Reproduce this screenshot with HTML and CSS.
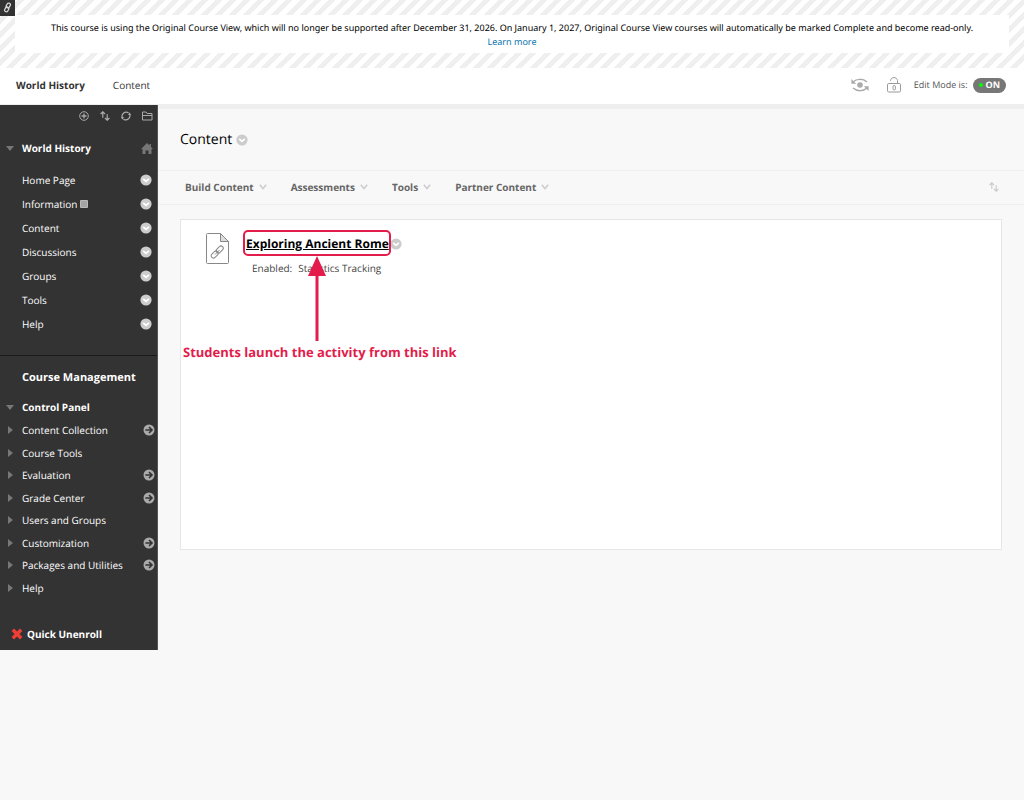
FILE: index.html
```html
<!DOCTYPE html>
<html lang="en">
<head>
    <meta charset="UTF-8">
    <meta name="viewport" content="width=device-width, initial-scale=1.0">
    <title>Content – World History</title>
    <link rel="stylesheet" href="styles.css">
</head>
<body>
    <svg width="0" height="0" class="defs" aria-hidden="true">
        <symbol id="chip" viewBox="0 0 12 12">
            <circle cx="6" cy="6" r="5.6" fill="#ccc"/>
            <path d="M3.2 4.8l2.8 2.6 2.800-2.600" fill="none" stroke="currentColor" stroke-width="1.6"/>
        </symbol>
        <symbol id="go" viewBox="0 0 12 12">
            <circle cx="6" cy="6" r="5.5" fill="#aaa"/>
            <path d="M2.4 6h6.4M6 3l3 3-3 3" fill="none" stroke="#333" stroke-width="1.6"/>
        </symbol>
        <symbol id="chevron" viewBox="0 0 8 6">
            <path d="M.8 .8L4 4.6 7.2 .8" fill="none" stroke="#ccc" stroke-width="1.5"/>
        </symbol>
        <symbol id="sort" viewBox="0 0 10 10">
            <path d="M2.8 6.8V1M.6 3l2.2-2.2L5 3M7.2 3.2V9M5 7l2.2 2.2L9.4 7" fill="none" stroke="currentColor" stroke-width="1.2"/>
        </symbol>
    </svg>

    <div class="notice">
        <a href="#" class="permalink" aria-label="Quick Links">
            <svg width="9" height="11" viewBox="0 0 9 11" fill="none" stroke="#ddd" stroke-width="1.2">
                <rect x="3.6" y="1" width="3.4" height="5" rx="1.7" transform="rotate(30 5.3 3.5)"/>
                <rect x="2" y="4.9" width="3.4" height="5" rx="1.7" transform="rotate(30 3.7 7.4)"/>
            </svg>
        </a>
        <div class="notice-text">
            This course is using the Original Course View, which will no longer be supported after December 31, 2026. On January 1, 2027, Original Course View courses will automatically be marked Complete and become read-only.
            <a href="#">Learn more</a>
        </div>
    </div>

    <header class="topbar">
        <nav class="crumbs">
            <a href="#" class="course">World History</a>
            <a href="#">Content</a>
        </nav>
        <div class="mode">
            <button type="button" aria-label="Student preview">
                <svg width="18" height="14" viewBox="0 0 18 14" fill="none" stroke="#aaa" stroke-width="1.5">
                    <circle cx="9" cy="7" r="2.8" fill="#aaa" stroke="none"/>
                    <path d="M2 4C5.5 .6 12 .4 16 4M2 10c4 3.6 10.500 3.400 14 0"/>
                    <path d="M.4 1v4.800h4.800zM17.600 13V8.200h-4.800z" fill="#aaa" stroke="none"/>
                </svg>
            </button>
            <button type="button" aria-label="Course is available">
                <svg width="14" height="16" viewBox="0 0 14 16" fill="none" stroke="#999">
                    <rect x=".5" y="6.500" width="13" height="8.500" rx="1.200"/>
                    <path d="M3.500 4V3.500C4-.4 10-.4 10.500 3.500V6.500"/>
                    <rect x="6" y="8.500" width="2.400" height="4.500" rx="1.200"/>
                </svg>
            </button>
            <span class="mode-label" id="mode-label">Edit Mode is:</span>
            <button type="button" class="toggle" aria-labelledby="mode-label"><i></i>ON</button>
        </div>
    </header>

    <div class="page">
        <aside class="sidebar">
            <div class="menu-tools">
                <button type="button" aria-label="Add menu item">
                    <svg width="10" height="10" viewBox="0 0 10 10" fill="none" stroke="#aaa"><circle cx="5" cy="5" r="4.300"/><path d="M5 2.500v5M2.500 5h5" stroke-width="1.300"/></svg>
                </button>
                <button type="button" aria-label="Reorder"><svg width="10" height="10"><use href="#sort"/></svg></button>
                <button type="button" aria-label="Refresh">
                    <svg width="10" height="10" viewBox="0 0 10 10" fill="none" stroke="#aaa" stroke-width="1.200"><path d="M1.500 7.200A4.200 4.200 0 0 1 7.500 1.800M8.500 2.800A4.200 4.200 0 0 1 2.500 8.200"/><path d="M0 6h3L1.500 8.800zM10 4H7l1.500-2.800z" fill="#aaa" stroke="none"/></svg>
                </button>
                <button type="button" aria-label="Folder view">
                    <svg width="11" height="10" viewBox="0 0 11 10" fill="none" stroke="#aaa"><path d="M.5 9V1h3.500l1 1.500h5V9zM.5 4.500h9.500"/></svg>
                </button>
            </div>

            <div class="menu-title">
                <span class="tri-down"></span>
                <a href="#">World History</a>
                <svg width="12" height="11" viewBox="0 0 12 11"><path d="M6 0L0 6h1.500v5h3V7.500h3V11h3V6H12L10 4V1H8.500v1.500z" fill="#777"/></svg>
            </div>

            <ul class="menu">
                <li><a href="#">Home Page</a><svg class="chip"><use href="#chip"/></svg></li>
                <li><a href="#">Information</a><svg class="empty" width="8" height="8" viewBox="0 0 8 8"><rect width="8" height="8" rx="1" fill="#bbb"/><path d="M1.500 2h5M1.500 4h5M1.500 6h5" stroke="#666" stroke-dasharray="1 1"/></svg><svg class="chip"><use href="#chip"/></svg></li>
                <li><a href="#">Content</a><svg class="chip"><use href="#chip"/></svg></li>
                <li><a href="#">Discussions</a><svg class="chip"><use href="#chip"/></svg></li>
                <li><a href="#">Groups</a><svg class="chip"><use href="#chip"/></svg></li>
                <li><a href="#">Tools</a><svg class="chip"><use href="#chip"/></svg></li>
                <li><a href="#">Help</a><svg class="chip"><use href="#chip"/></svg></li>
            </ul>

            <section class="management">
                <h2>Course Management</h2>
                <div class="menu-title">
                    <span class="tri-down"></span>
                    <a href="#">Control Panel</a>
                </div>
                <ul class="panel">
                    <li><a href="#">Content Collection</a><svg class="go"><use href="#go"/></svg></li>
                    <li><a href="#">Course Tools</a></li>
                    <li><a href="#">Evaluation</a><svg class="go"><use href="#go"/></svg></li>
                    <li><a href="#">Grade Center</a><svg class="go"><use href="#go"/></svg></li>
                    <li><a href="#">Users and Groups</a></li>
                    <li><a href="#">Customization</a><svg class="go"><use href="#go"/></svg></li>
                    <li><a href="#">Packages and Utilities</a><svg class="go"><use href="#go"/></svg></li>
                    <li><a href="#">Help</a></li>
                </ul>
            </section>

            <a href="#" class="unenroll">
                <svg width="12" height="12" viewBox="0 0 12 12"><path d="M1.800 1.800l8.400 8.400M10.200 1.800l-8.400 8.400" stroke="#ef3e36" stroke-width="3.400"/></svg>
                Quick Unenroll
            </a>
        </aside>

        <main class="content">
            <h1>Content <svg class="chip"><use href="#chip"/></svg></h1>

            <div class="actions">
                <button type="button">Build Content <svg class="chevron"><use href="#chevron"/></svg></button>
                <button type="button">Assessments <svg class="chevron"><use href="#chevron"/></svg></button>
                <button type="button">Tools <svg class="chevron"><use href="#chevron"/></svg></button>
                <button type="button">Partner Content <svg class="chevron"><use href="#chevron"/></svg></button>
                <button type="button" class="reorder" aria-label="Reorder content"><svg width="10" height="10"><use href="#sort"/></svg></button>
            </div>

            <div class="items">
                <div class="item">
                    <svg width="23" height="31" viewBox="0 0 23 31" fill="none" stroke="#888">
                        <path d="M1.500 .5H14.500L22.500 8.500V29.500a1 1 0 0 1-1 1H1.500a1 1 0 0 1-1-1V1.500a1 1 0 0 1 1-1z" fill="#fff"/>
                        <path d="M14.500 .5V8.500H22.500z" fill="#ddd"/>
                        <rect x="11.500" y="12.500" width="4.500" height="8" rx="2.250" transform="rotate(45 13.750 16.500)"/>
                        <rect x="6.500" y="17.500" width="4.500" height="8" rx="2.250" transform="rotate(45 8.750 21.500)"/>
                        <path d="M9 21.500l4.500-4.500"/>
                    </svg>
                    <div class="item-body">
                        <h3><a href="#">Exploring Ancient Rome</a><svg class="chip"><use href="#chip"/></svg></h3>
                        <p><span>Enabled:</span>Statistics Tracking</p>
                        <div class="callout">
                            <div class="ring"></div>
                            <svg width="18" height="85" viewBox="0 0 18 85"><path d="M9 0L18 20H10.500V85H7.500V20H0z" fill="#e31c4b"/></svg>
                            <strong>Students launch the activity from this link</strong>
                        </div>
                    </div>
                </div>
            </div>
        </main>
    </div>
</body>
</html>
```

FILE: styles.css
```css
* {
    box-sizing: border-box;
}

body {
    margin: 0;
    font-family: "Open Sans", "Noto Sans", sans-serif;
    font-size: 10px;
    line-height: 14px;
    text-rendering: geometricPrecision;
    color: #000;
    background-color: #f8f8f8;
}

a {
    color: inherit;
    text-decoration: none;
}

button {
    padding: 0;
    border: 0;
    background: none;
    color: inherit;
    font: inherit;
    text-rendering: inherit;
    cursor: pointer;
}

svg {
    display: block;
    flex: none;
}

ul, h1, h2, h3, p {
    margin: 0;
    padding: 0;
    list-style: none;
}

.defs {
    position: absolute;
}

/* notice */
.notice {
    position: relative;
    padding: 15px;
    background: repeating-linear-gradient(-45deg, #fff 0, #fff 5px, #efefef 5px, #efefef 10px);
}

.notice-text {
    min-height: 38px;
    padding: 6px 4px 4px;
    font-family: "Noto Sans", sans-serif;
    font-size: 9px;
    text-align: center;
    background-color: #fff;
}

.notice-text a {
    display: block;
    color: #0a74ad;
}

.permalink {
    position: absolute;
    top: 0;
    left: 0;
    padding: 2px 3px 3px;
    background-color: #333;
}

/* top bar */
.topbar {
    display: flex;
    justify-content: space-between;
    align-items: center;
    height: 37px;
    padding: 0 18px 2px 16px;
    border-bottom: 1px solid #eee;
    background-color: #fff;
    color: #333;
}

.crumbs {
    display: flex;
    gap: 28px;
}

.course {
    font-weight: bold;
}

.mode {
    display: flex;
    align-items: center;
    gap: 18px;
    font-size: 9px;
}

.mode-label {
    margin: 0 -13px 0 -5px;
    color: #555;
}

.toggle {
    display: flex;
    align-items: center;
    gap: 3px;
    height: 15px;
    padding: 0 6px;
    border-radius: 8px;
    background-color: #777;
    color: #fff;
    font-weight: bold;
}

.toggle i {
    width: 4px;
    height: 4px;
    border-radius: 2px;
    background-color: #0f0;
}

.page {
    display: flex;
    align-items: flex-start;
}

/* course menu */
.sidebar {
    flex: none;
    width: 158px;
    border-right: 1px solid #555;
    background-color: #333;
    color: #fff;
}

.menu-tools {
    display: flex;
    justify-content: flex-end;
    gap: 11px;
    padding: 6px 4px 7px 0;
    color: #aaa;
}

.menu-title {
    display: flex;
    align-items: center;
    height: 40px;
    padding: 0 4px 0 6px;
    font-weight: bold;
}

.menu-title a {
    flex: 1;
}

.tri-down {
    margin-right: 8px;
    border: 4px solid transparent;
    border-top: 5px solid #777;
    border-bottom: 0;
}

.menu {
    padding-bottom: 19px;
}

.menu li {
    display: flex;
    align-items: center;
    height: 24px;
    padding: 0 5px 0 22px;
}

.chip {
    width: 12px;
    height: 12px;
    color: #fff;
}

.menu .chip {
    margin-left: auto;
}

.empty {
    margin-left: 3px;
}

.management {
    padding-top: 11px;
    border-top: 1px solid #1a1a1a;
}

.management h2 {
    padding: 4px 0 4px 22px;
    font-size: 11px;
}

.management .menu-title {
    height: 36px;
    margin-bottom: -6px;
}

.panel li {
    display: flex;
    align-items: center;
    height: 22px;
    padding: 0 2px 0 8px;
}

.panel li:nth-child(even) {
    height: 23px;
}

.panel li::before {
    content: "";
    margin-right: 9px;
    border: 4px solid transparent;
    border-left: 5px solid #777;
    border-right: 0;
}

.go {
    width: 12px;
    height: 12px;
    margin-left: auto;
}

.unenroll {
    display: flex;
    align-items: center;
    gap: 4px;
    padding: 28px 0 9px 11px;
    font-weight: bold;
}

/* content area */
.content {
    flex: 1;
    min-width: 0;
    border-top: 4px solid #eee;
}

.content h1 {
    display: flex;
    align-items: center;
    gap: 4px;
    height: 61px;
    padding: 1px 0 0 22px;
    font-size: 14px;
    font-weight: normal;
}

.actions {
    display: flex;
    align-items: center;
    gap: 24px;
    height: 35px;
    padding: 0 25px 1px 27px;
    border-top: 1px solid #f0f0f0;
    border-bottom: 1px solid #f0f0f0;
    color: #666;
    font-weight: bold;
}

.actions button {
    display: flex;
    align-items: center;
    gap: 5px;
}

.chevron {
    width: 8px;
    height: 6px;
}

.actions .reorder {
    margin-left: auto;
    color: #ccc;
}

.items {
    min-height: 331px;
    margin: 14px 22px 0;
    padding: 13px 25px;
    border: 1px solid #e6e6e6;
    background-color: #fff;
}

.item {
    display: flex;
    gap: 17px;
}

.item-body {
    position: relative;
}

.item h3 {
    display: flex;
    align-items: center;
    gap: 1px;
    height: 21px;
    font-size: 12px;
}

.item h3 a {
    text-decoration: underline;
}

.item p {
    padding: 7px 0 0 6px;
    color: #444;
}

.item p span {
    margin-right: 6px;
}

.callout {
    position: absolute;
    top: -3px;
    left: -63px;
    width: 268px;
    color: #e31c4b;
}

.ring {
    width: 148px;
    height: 26px;
    margin-left: 60px;
    border: 2px solid #e31c4b;
    border-radius: 5px;
}

.callout svg {
    margin-left: 125px;
}

.callout strong {
    display: block;
    margin-top: 3px;
    font-size: 13px;
    line-height: 16px;
    white-space: nowrap;
}
```
